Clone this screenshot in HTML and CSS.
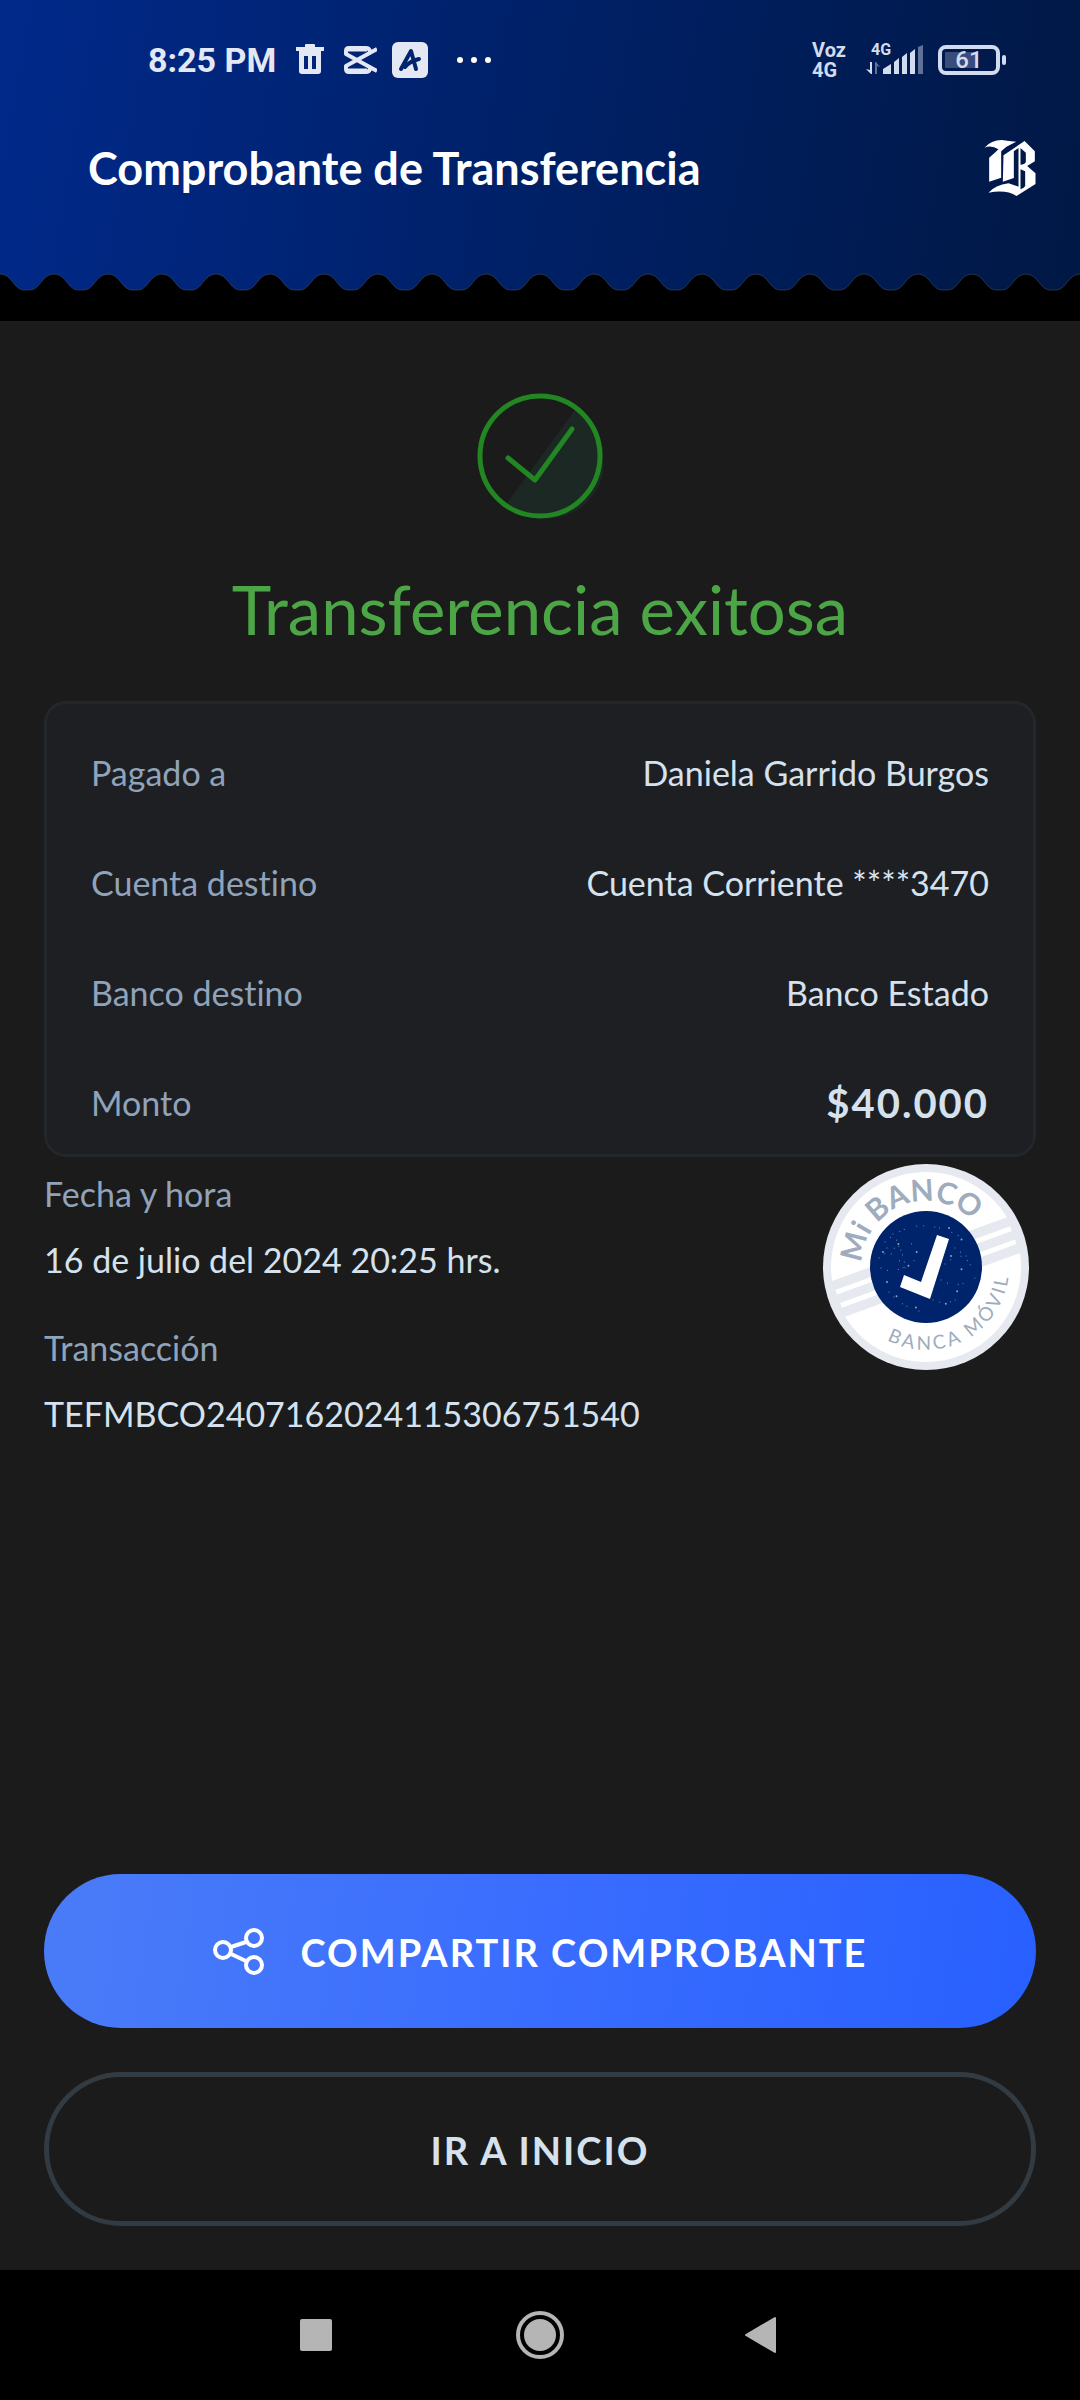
FILE: index.html
```html
<!DOCTYPE html>
<html lang="es">
<head>
<meta charset="utf-8">
<meta name="viewport" content="width=device-width, initial-scale=1">
<title>Comprobante de Transferencia</title>
<link rel="stylesheet" href="styles.css">
</head>
<body>
<div class="screen">
  <header class="header">
    <div class="status">
      <div class="status-left">
        <span class="time">8:25 PM</span>
        <svg class="trash" width="28" height="32" viewBox="0 0 28 32" aria-hidden="true"><path fill="#e4e8f5" fill-rule="evenodd" d="M9 3V1q0-1 1-1h8q1 0 1 1v2h9v4H0V3zM3 7h22v20q0 3-3 3H6q-3 0-3-3zM8 12v13h4V12zM16 12v13h4V12z"/></svg>
        <svg class="clip" width="34" height="28" viewBox="0 0 34 28" aria-hidden="true"><g fill="none" stroke="#e4e8f5" stroke-width="4" stroke-linejoin="round"><path d="M34 3L3 20v3q0 3 3 3h17q3 0 4-3M34 25L3 8V5q0-3 3-3h17q3 0 4 3"/><path stroke-width="3" d="M4 4h20M4 24h20"/></g></svg>
        <svg class="app" width="36" height="36" viewBox="0 0 36 36" aria-hidden="true"><rect width="36" height="36" rx="6" fill="#e4e8f5"/><path d="M9 27L19 9l5 18M13 25q5-6 14-8" fill="none" stroke="#00246e" stroke-width="4" stroke-linecap="round" stroke-linejoin="round"/></svg>
        <svg width="34" height="6" viewBox="0 0 34 6" aria-hidden="true"><g fill="#fff"><circle cx="3" cy="3" r="3"/><circle cx="17" cy="3" r="3"/><circle cx="31" cy="3" r="3"/></g></svg>
      </div>
      <div class="status-right">
        <div class="volte"><span>Voz</span><span>4G</span></div>
        <div class="signal">
          <span class="net">4G</span>
          <svg width="58" height="30" viewBox="0 0 58 30" aria-hidden="true"><g fill="#d3dbee"><path d="M4 17h2v12H5l-5-5 4 1zM17 29v-5l8-5v10zM28 29V17l5-4v16zM36 29V12l5-4v21zM44 29V8l5-4v25z"/><path opacity=".45" d="M9 29V17h1l4 5-3-1v8zM52 29V2l5-2v29z"/></g></svg>
        </div>
        <div class="battery"><span>61</span></div>
      </div>
    </div>
    <div class="titlebar">
      <h1>Comprobante de Transferencia</h1>
      <svg class="logo" width="52" height="56" viewBox="0 0 153 168" role="img" aria-label="B"><path fill="#fff" d="M0 23Q20 0 52 0q22 4 43 5L66 20Q57 27 50 34v79L14 125V53Q30 40 42 28 20 14 0 23zM57 46L120 3l31 31v30L128 78l25 22v32l-57 36q-30-20-84-10 20-22 60-28l30 10V24L88 34v80L55 125zM108 24v50q12 0 16-8V38zM108 88v60q12-4 14-10v-44z"/></svg>
    </div>
    <svg class="waves" width="100%" height="48" aria-hidden="true"><defs><pattern id="wave" width="54" height="48" patternUnits="userSpaceOnUse"><path d="M0 1C12 1 14 17 24 17h6C40 17 42 1 54 1V48H0z" fill="#000"/><path d="M0 1C12 1 14 17 24 17h6C40 17 42 1 54 1" fill="none" stroke="#33405c" stroke-width="1" opacity=".7"/></pattern></defs><rect width="100%" height="48" fill="url(#wave)"/></svg>
  </header>

  <main class="content">
    <svg class="success" width="126" height="126" viewBox="0 0 126 126" aria-hidden="true"><path d="M98 17L30 110A58 58 0 1 0 98 17z" fill="#1b2823"/><circle cx="63" cy="63" r="60" fill="none" stroke="#228622" stroke-width="5"/><path d="M31 65l27 22 37-51" fill="none" stroke="#228622" stroke-width="5" stroke-linecap="round" stroke-linejoin="round"/></svg>
    <h2>Transferencia exitosa</h2>

    <dl class="card">
      <div class="row"><dt>Pagado a</dt><dd>Daniela Garrido Burgos</dd></div>
      <div class="row"><dt>Cuenta destino</dt><dd>Cuenta Corriente ****3470</dd></div>
      <div class="row"><dt>Banco destino</dt><dd>Banco Estado</dd></div>
      <div class="row"><dt>Monto</dt><dd class="amount">$40.000</dd></div>
    </dl>

    <div class="meta">
      <dl class="details">
        <div><dt>Fecha y hora</dt><dd>16 de julio del 2024 20:25 hrs.</dd></div>
        <div><dt>Transacción</dt><dd>TEFMBCO2407162024115306751540</dd></div>
      </dl>
      <svg class="seal" width="206" height="206" viewBox="0 0 206 206">
        <defs>
          <path id="arc-top" d="M39 99A64 64 0 1 1 167 103"/>
          <path id="arc-bottom" d="M64 176A83 83 0 0 0 186 103"/>
        </defs>
        <circle cx="103" cy="103" r="103" fill="#e6e9ef"/>
        <circle cx="103" cy="103" r="95" fill="#fff"/>
        <g transform="translate(103 103) rotate(-20)"><path d="M-96-19H96V19H-96z" fill="#e6e9ef"/><path d="M-93-7H93M-93 7H93" stroke="#fff" stroke-width="5"/></g>
        <circle cx="103" cy="103" r="56" fill="#00246b"/>
        <g fill="none" stroke="#8f9fc4" stroke-linecap="round"><path stroke-width="1" stroke-dasharray="0 7 0 11 0 5 0 13" d="M62 78Q82 60 104 62T142 76M56 94q20-16 38-14M58 104q14 8 34-8M64 84q12 20 28 12M122 100q14-12 30-6M118 116q16 10 34-2M110 136q18 8 32-8M66 128q14 16 34 20M132 84q10 6 18 22M70 70q10 16 12 34"/><path stroke-width="2" stroke-dasharray="0 17 0 23" d="M60 88Q84 72 92 84T72 110M128 92q18 14 8 32T112 144M64 118q12 24 32 26M126 64q12 10 22 22"/></g>
        <path d="M114 71l12 4-19 60-30-12 4-12 17 7z" fill="#fff"/>
        <text class="seal-top"><textPath href="#arc-top">Mi BANCO</textPath></text>
        <text class="seal-bottom"><textPath href="#arc-bottom">BANCA MÓVIL</textPath></text>
      </svg>
    </div>

    <div class="actions">
      <button class="btn primary" type="button">
        <svg width="52" height="49" viewBox="0 0 52 49" aria-hidden="true"><g fill="none" stroke="#fff" stroke-width="4"><circle cx="10" cy="22" r="8"/><circle cx="41" cy="10" r="8"/><circle cx="41" cy="37" r="8"/><path d="M18 19l15-5M18 26l15 7"/></g></svg>
        <span>COMPARTIR COMPROBANTE</span>
      </button>
      <button class="btn outline" type="button">IR A INICIO</button>
    </div>
  </main>

  <nav class="navbar" aria-label="Sistema">
    <button type="button" aria-label="Recientes"><svg width="50" height="50" viewBox="0 0 50 50"><rect x="9" y="9" width="32" height="32" rx="2" fill="#b5b5b5"/></svg></button>
    <button type="button" aria-label="Inicio"><svg width="50" height="50" viewBox="0 0 50 50"><circle cx="25" cy="25" r="22" fill="none" stroke="#b5b5b5" stroke-width="4"/><circle cx="25" cy="25" r="16" fill="#b5b5b5"/></svg></button>
    <button type="button" aria-label="Atrás"><svg width="50" height="50" viewBox="0 0 50 50"><path d="M7 25L36 8v34z" fill="#b5b5b5" stroke="#b5b5b5" stroke-width="2" stroke-linejoin="round"/></svg></button>
  </nav>
</div>
</body>
</html>
```
FILE: styles.css
```css
* { box-sizing: border-box; }

body {
  margin: 0;
  background: #1b1b1b;
  font-family: Lato, "Noto Sans", sans-serif;
  font-size: 34px;
  font-variant-ligatures: none;
  color: #d6e1ee;
}

h1, h2, dl, dd { margin: 0; }
svg { display: block; flex: none; }

.screen {
  display: flex;
  flex-direction: column;
  min-height: 100vh;
}

.header {
  background: linear-gradient(100deg, #00298a, #001844);
}

.status {
  display: flex;
  justify-content: space-between;
  align-items: center;
  height: 120px;
  padding: 0 80px 0 148px;
  font-family: Roboto, sans-serif;
  font-weight: 700;
  color: #d3dbee;
}

.status-left, .status-right {
  display: flex;
  align-items: center;
}

.time {
  margin-right: 20px;
  color: #e4e8f5;
}

.clip { margin: 0 15px 0 19px; }
.app { margin-right: 29px; }

.volte {
  display: flex;
  flex-direction: column;
  margin-right: 20px;
  font-size: 20px;
  line-height: 20px;
}

.signal {
  position: relative;
  margin-right: 14px;
}

.net {
  position: absolute;
  left: 5px;
  top: -3px;
  font-size: 16px;
  line-height: 16px;
}

.battery {
  position: relative;
  width: 62px;
  height: 30px;
  border: 4px solid #d3dbee;
  border-radius: 8px;
  background: linear-gradient(#3a4c7a, #3a4c7a) 3px 3px / 32px 16px no-repeat;
  font-size: 24px;
  font-weight: 500;
  line-height: 23px;
  text-align: center;
}

.battery::after {
  content: "";
  position: absolute;
  right: -10px;
  top: 6px;
  width: 4px;
  height: 10px;
  border-radius: 2px;
  background: #d3dbee;
}

.titlebar {
  display: flex;
  justify-content: space-between;
  align-items: center;
  height: 96px;
  margin-bottom: 57px;
  padding: 0 44px 0 88px;
}

h1 {
  font-size: 45px;
  font-weight: 700;
  color: #fff;
}

.content {
  flex: 1;
  display: flex;
  flex-direction: column;
  padding: 72px 44px 44px;
}

.success { align-self: center; }

h2 {
  margin: 50px 0 52px;
  font-size: 67px;
  font-weight: 400;
  line-height: 80px;
  text-align: center;
  color: #4ca646;
}

dt { color: #90a3ba; }

.card {
  display: flex;
  flex-direction: column;
  gap: 40px;
  padding: 34px 44px 16px;
  border: 3px solid #23272b;
  border-radius: 22px;
  background: #1d1f23;
}

.row {
  display: flex;
  justify-content: space-between;
  line-height: 70px;
}

.amount {
  font-size: 40px;
  font-weight: 700;
  letter-spacing: 2px;
}

.meta {
  display: flex;
  justify-content: space-between;
  padding: 4px 7px 0 0;
}

.details {
  display: flex;
  flex-direction: column;
  gap: 22px;
  line-height: 66px;
}

.seal { margin-top: 3px; }

.seal-top {
  font-size: 30px;
  font-weight: 700;
  fill: #9eacbd;
}

.seal-bottom {
  font-size: 19px;
  letter-spacing: 3px;
  fill: #9eacbd;
}

.actions {
  display: flex;
  flex-direction: column;
  gap: 44px;
  margin-top: auto;
}

.btn {
  display: flex;
  justify-content: center;
  align-items: center;
  gap: 36px;
  height: 154px;
  padding: 2px 0 0;
  border: 0;
  border-radius: 77px;
  font: 700 38px Lato, "Noto Sans", sans-serif;
  font-variant-ligatures: none;
  letter-spacing: 2px;
}

.primary {
  background: linear-gradient(98deg, #4a7cf8, #3a6dfe 50%, #2860ff);
  color: #fff;
}

.outline {
  border: 5px solid #333b42;
  background: none;
  color: #d6e1ee;
}

.navbar {
  display: flex;
  justify-content: center;
  height: 130px;
  background: #000;
}

.navbar button {
  display: flex;
  justify-content: center;
  align-items: center;
  width: 224px;
  padding: 0;
  border: 0;
  background: none;
}
```
